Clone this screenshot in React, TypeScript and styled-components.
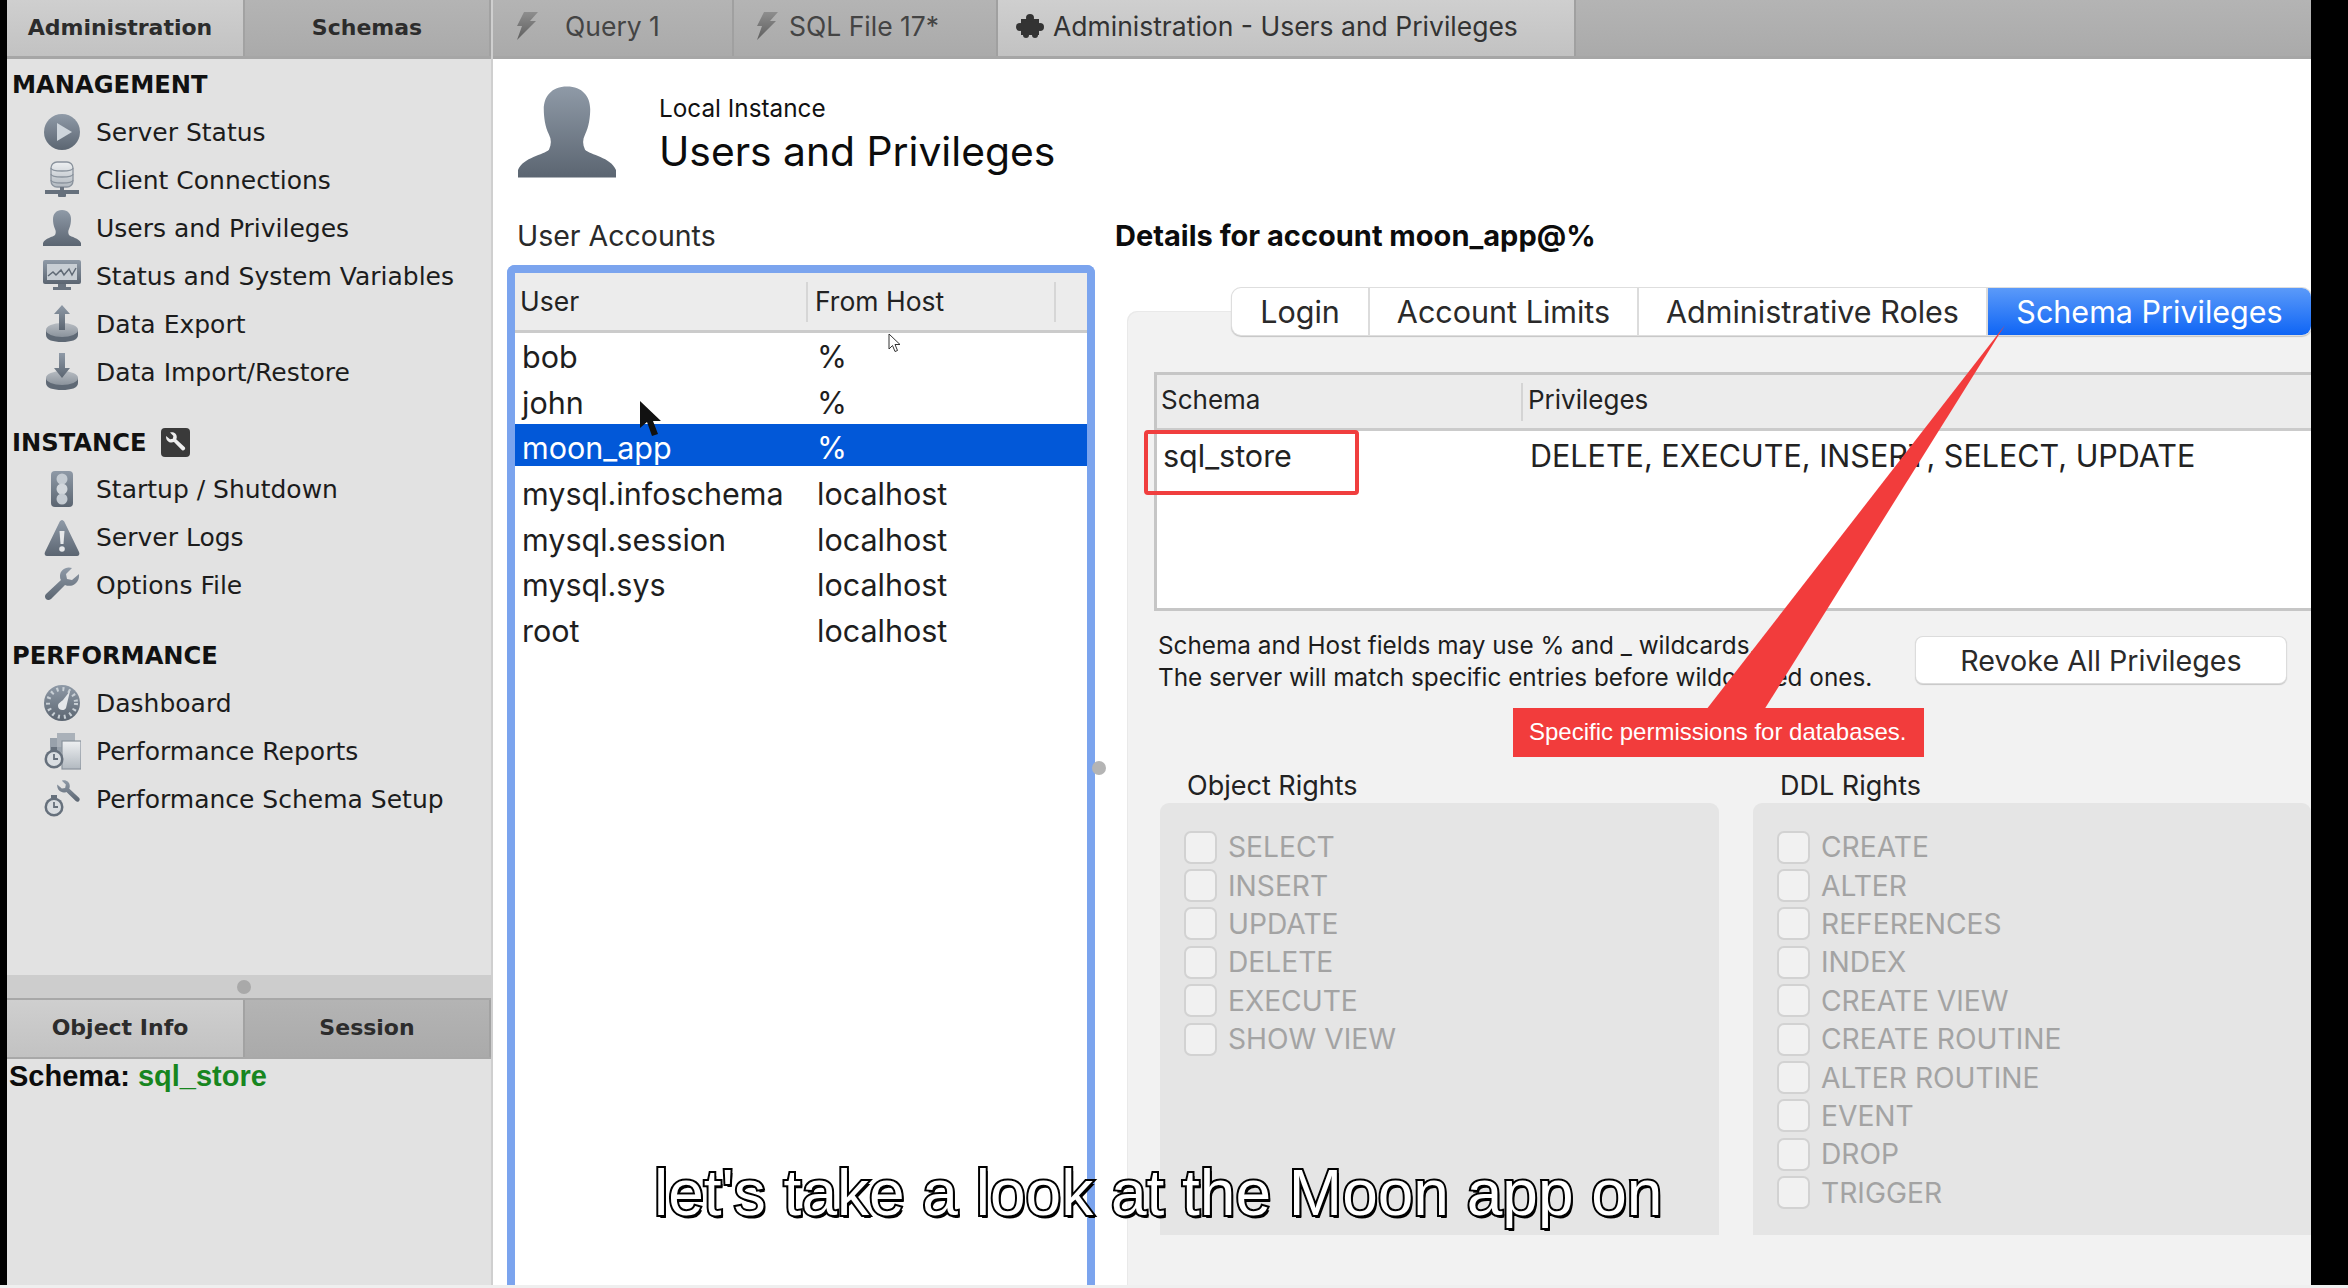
import React from "react";
import styled, { createGlobalStyle } from "styled-components";

const SF = `Inter, "Liberation Sans", sans-serif`;
const LUCIDA = `"DejaVu Sans", "Open Sans", sans-serif`;
const HELV = `"Liberation Sans", Arial, sans-serif`;

const GlobalStyle = createGlobalStyle`
  html, body {
    margin: 0;
    padding: 0;
    background: #000;
    overflow: hidden;
  }
  * {
    box-sizing: border-box;
  }
`;

const Page = styled.div`
  width: 2348px;
  height: 1288px;
  background: #000;
`;
const Frame = styled.div`
  position: relative;
  display: flex;
  width: 2304px;
  height: 1285px;
  margin-left: 7px;
  overflow: hidden;
`;
const BottomStrip = styled.div`
  height: 3px;
  background: #efefef;
`;

/* left sidebar */
const Sidebar = styled.aside`
  display: flex;
  flex-direction: column;
  width: 486px;
  flex-shrink: 0;
  background: #e2e2e2;
  border-right: 2px solid #cfcfcf;
`;
const SideTabs = styled.div`
  display: grid;
  grid-template-columns: 238px 1fr;
  height: 59px;
  border-bottom: 3px solid #a6a6a6;
`;
const SideTab = styled.div<{ $active?: boolean }>`
  display: flex;
  align-items: center;
  justify-content: center;
  padding: 0 ${(p) => (p.$active ? "10px" : "0")} 2px 0;
  background: ${(p) =>
    p.$active
      ? "linear-gradient(#cfcfcf, #c2c2c2)"
      : "linear-gradient(#b4b4b4, #aaaaaa)"};
  border-right: 2px solid #a2a2a2;
  color: #2c2c2c;
  font-family: ${LUCIDA};
  font-size: 22px;
  font-weight: 700;
`;
const Nav = styled.nav`
  display: flex;
  flex-direction: column;
  gap: 23.5px;
  flex: 1;
  padding-top: 3px;
`;
const SectionHead = styled.div`
  display: flex;
  align-items: center;
  gap: 14px;
  height: 46px;
  padding-left: 5px;
  color: #111;
  font-family: ${LUCIDA};
  font-size: 24.2px;
  font-weight: 700;
`;
const NavRow = styled.div`
  display: flex;
  align-items: center;
  gap: 15px;
  height: 48px;
  padding-left: 36px;
  color: #1c1c1c;
  font-family: ${LUCIDA};
  font-size: 25px;
  white-space: nowrap;
`;
const HSplitter = styled.div`
  display: flex;
  align-items: center;
  justify-content: center;
  height: 23px;
  padding-right: 10px;
  background: #cdcdcd;
`;
const Knob = styled.span`
  width: 14px;
  height: 14px;
  border-radius: 50%;
  background: #a9a9a9;
`;
const InfoTabs = styled.div`
  display: grid;
  grid-template-columns: 238px 1fr;
  height: 61px;
  border-top: 2px solid #a8a8a8;
  border-bottom: 2px solid #a8a8a8;
`;
const InfoPane = styled.div`
  height: 226px;
  padding: 0 0 0 2px;
  color: #0c0c0c;
  font-family: ${HELV};
  font-size: 29px;
  font-weight: 700;
  line-height: 34px;
`;
const SchemaName = styled.span`
  color: #17861f;
`;

/* main area */
const Main = styled.main`
  display: flex;
  flex-direction: column;
  flex: 1;
  min-width: 0;
  background: #fff;
`;
const DocTabs = styled.div`
  display: flex;
  height: 59px;
  flex-shrink: 0;
  background: linear-gradient(#b4b4b4, #aaaaaa);
  border-bottom: 3px solid #a6a6a6;
`;
const DocTab = styled.div<{ $width: number; $pad: number; $gap: number; $active?: boolean }>`
  display: flex;
  align-items: center;
  gap: ${(p) => p.$gap}px;
  width: ${(p) => p.$width}px;
  padding: 0 0 4px ${(p) => p.$pad}px;
  background: ${(p) => (p.$active ? "linear-gradient(#cfcfcf, #c2c2c2)" : "none")};
  border-right: 2px solid #a0a0a0;
  color: ${(p) => (p.$active ? "#333" : "#444")};
  font-family: ${SF};
  font-size: 26.5px;
  white-space: nowrap;
`;
const PageHead = styled.header`
  display: flex;
  gap: 43px;
  height: 151px;
  flex-shrink: 0;
  padding: 25px 0 0 25px;
`;
const PageTitles = styled.div`
  margin-top: 9px;
`;
const Instance = styled.div`
  color: #111;
  font-family: ${SF};
  font-size: 24.3px;
  line-height: 30px;
`;
const PageTitle = styled.h1`
  margin: 0;
  color: #0c0c0c;
  font-family: ${SF};
  font-size: 40.8px;
  font-weight: 400;
  line-height: 56px;
`;
const Columns = styled.div`
  display: flex;
  flex: 1;
  min-height: 0;
`;
const AccountsCol = styled.section`
  display: flex;
  flex-direction: column;
  width: 588px;
  margin-left: 14px;
  flex-shrink: 0;
`;
const SectionLabel = styled.div`
  height: 50px;
  padding-left: 10px;
  color: #2a2a2a;
  font-family: ${SF};
  font-size: 28.5px;
  line-height: 52px;
`;
const FocusRing = styled.div`
  flex: 1;
  margin-top: 5px;
  background: #fff;
  border: 8px solid #7ba4ee;
  border-bottom: 0;
  border-radius: 8px 8px 0 0;
`;
const UserHead = styled.div`
  display: grid;
  grid-template-columns: 293px 248px 1fr;
  height: 60px;
  background: #ececec;
  border-bottom: 3px solid #cbcbcb;
`;
const UserHeadCell = styled.div<{ $pad: number; $sep?: boolean }>`
  position: relative;
  padding-left: ${(p) => p.$pad}px;
  color: #222;
  font-family: ${SF};
  font-size: 26.5px;
  line-height: 57px;

  &::after {
    content: "";
    display: ${(p) => (p.$sep ? "block" : "none")};
    position: absolute;
    top: 9px;
    right: 0;
    width: 2px;
    height: 40px;
    background: #d6d6d6;
  }
`;
const UserRow = styled.div<{ $selected?: boolean }>`
  display: grid;
  grid-template-columns: 293px 248px 1fr;
  height: 45.7px;
  background: ${(p) => (p.$selected ? "linear-gradient(#0258d8, #0258d8)" : "none")} no-repeat;
  background-size: 100% 42px;
  color: ${(p) => (p.$selected ? "#fff" : "#1e1e1e")};
  font-family: ${SF};
  font-size: 30.5px;
  line-height: 47.5px;
`;
const UserName = styled.div`
  padding-left: 7px;
`;
const UserHost = styled.div`
  padding-left: 9px;
`;
const VSplitter = styled.span`
  position: absolute;
  left: 1085px;
  top: 761px;
  width: 14px;
  height: 14px;
  border-radius: 50%;
  background: #b4b4b4;
`;
const DetailsCol = styled.section`
  display: flex;
  flex-direction: column;
  flex: 1;
  min-width: 0;
  margin-left: 20px;
`;
const DetailsTitle = styled.h2`
  height: 50px;
  margin: 0;
  color: #0c0c0c;
  font-family: ${SF};
  font-size: 29px;
  font-weight: 700;
  line-height: 52px;
`;
const Panel = styled.div`
  position: relative;
  flex: 1;
  margin: 51px 0 0 12px;
  background: #f2f2f2;
  border-radius: 10px 0 0 0;
  box-shadow: inset 1px 1px 0 #e9e9e9;
`;
const PanelTabs = styled.div`
  position: relative;
  top: -23px;
  display: grid;
  grid-template-columns: 138px 269px 349px 323px;
  height: 47px;
  margin: 0 0 -23px 105px;
  background: #fff;
  border-radius: 9px;
  box-shadow: 0 0 0 1px #dedede, 0 1px 1px 1px #c4c4c4;
`;
const PanelTab = styled.div<{ $active?: boolean }>`
  display: flex;
  align-items: center;
  justify-content: center;
  border-right: ${(p) => (p.$active ? "0" : "2px solid #dcdcdc")};
  border-radius: ${(p) => (p.$active ? "0 9px 9px 0" : "0")};
  background: ${(p) => (p.$active ? "linear-gradient(#5b9af9, #0f65f5)" : "none")};
  color: ${(p) => (p.$active ? "#fff" : "#2a2a2a")};
  font-family: ${SF};
  font-size: 30.5px;
`;
const SchemaTable = styled.div`
  height: 239px;
  margin: 37px 0 0 27px;
  background: #fff;
  border: 3px solid #c6c6c6;
  border-right: 0;
`;
const SchemaHead = styled.div`
  display: grid;
  grid-template-columns: 364px 1fr;
  height: 56px;
  background: #ececec;
  border-bottom: 3px solid #cbcbcb;
  color: #222;
  font-family: ${SF};
  font-size: 26px;
  line-height: 49px;
`;
const SchemaHeadCell = styled.div<{ $pad: number }>`
  padding-left: ${(p) => p.$pad}px;
  & + & {
    background: linear-gradient(#d4d4d4, #d4d4d4) no-repeat 0 8px / 2px 38px;
  }
`;
const SchemaRow = styled.div`
  display: grid;
  grid-template-columns: 364px 1fr;
  color: #222;
  font-family: ${SF};
  font-size: 30.5px;
  line-height: 50px;
`;
const SchemaCell = styled.div<{ $pad: number }>`
  padding-left: ${(p) => p.$pad}px;
  white-space: nowrap;
`;
const NoteRow = styled.div`
  display: flex;
  height: 64px;
  margin-top: 18px;
  padding: 0 25px 0 31px;
`;
const Note = styled.div`
  color: #1c1c1c;
  font-family: ${SF};
  font-size: 24.3px;
  line-height: 32px;
  white-space: nowrap;
`;
const RevokeButton = styled.button`
  width: 370px;
  height: 46px;
  margin: 8px 0 0 auto;
  padding: 0;
  background: #fff;
  border: 0;
  border-radius: 7px;
  box-shadow: 0 0 0 1px #dcdcdc, 0 1px 1px 1px #c6c6c6;
  color: #2a2a2a;
  font-family: ${SF};
  font-size: 28.7px;
`;
const Rights = styled.div`
  display: grid;
  grid-template-columns: 559px 1fr;
  column-gap: 34px;
  margin: 76px 0 0 33px;
`;
const RightsLabel = styled.div`
  height: 34px;
  padding-left: 27px;
  color: #222;
  font-family: ${SF};
  font-size: 27px;
  line-height: 34px;
`;
const RightsBox = styled.div`
  height: 432px;
  padding: 25px 0 0 24px;
  background: #e5e5e5;
  border-radius: 9px 9px 0 0;
`;
const RightRow = styled.label`
  display: flex;
  align-items: center;
  gap: 11px;
  height: 38.4px;
  color: #a3a3a3;
  font-family: ${SF};
  font-size: 28.2px;
`;
const CheckBox = styled.span`
  width: 33px;
  height: 33px;
  flex-shrink: 0;
  background: #f1f1f1;
  border: 2px solid #d2d2d2;
  border-radius: 7px;
`;
const ArrowSvg = styled.svg`
  position: absolute;
  left: 0;
  top: 0;
  width: 100%;
  height: 100%;
  pointer-events: none;
`;
const Callout = styled.div`
  position: absolute;
  left: 386px;
  top: 397px;
  width: 411px;
  height: 49px;
  padding-left: 16px;
  background: #f23c3c;
  color: #fff;
  font-family: ${HELV};
  font-size: 24px;
  line-height: 48px;
  white-space: nowrap;
`;
const RedFrame = styled.div`
  position: absolute;
  left: 17px;
  top: 119px;
  width: 215px;
  height: 65px;
  border: 4px solid #f03e3e;
  border-radius: 4px;
`;
const Subtitle = styled.div`
  position: absolute;
  left: 647px;
  top: 1155px;
  color: #fff;
  font-family: ${HELV};
  font-size: 64px;
  line-height: 76px;
  white-space: nowrap;
  -webkit-text-stroke: 4px #000;
  paint-order: stroke fill;
  text-shadow: 2px 3px 0 #000;
`;
const CursorSvg = styled.svg<{ $x: number; $y: number }>`
  position: absolute;
  left: ${(p) => p.$x}px;
  top: ${(p) => p.$y}px;
`;
const IconSvg = styled.svg`
  width: 38px;
  height: 38px;
  flex-shrink: 0;
`;
const ToolTile = styled.svg`
  width: 29px;
  height: 29px;
`;
const HiddenDefs = styled.svg`
  position: absolute;
  width: 0;
  height: 0;
`;

/* icons */
const USER_PATH =
  "M19 1c-6 0-9 4-9 9 0 3 .5 7 2 10 1 2 1 4 0 6-2 2-10 3-12 8v3h38v-3c-2-5-10-6-12-8-1-2-1-4 0-6 1.5-3 2-7 2-10 0-5-3-9-9-9z";
const WRENCH_PATH =
  "M36 7l-7 6-5-1-1-5 6-6C23-1 17 3 17 9c0 2 .3 3 1 4L3 27c-3 3 1 8 5 5l14-14c7 3 15-2 14-11z";

const ServerIcon = () => (
  <IconSvg viewBox="0 0 38 38">
    <circle cx="19" cy="19" r="18" fill="url(#slate)" />
    <polygon points="14,10 14,28 29,19" fill="#ced5dc" />
  </IconSvg>
);
const ClientIcon = () => (
  <IconSvg viewBox="0 0 38 38">
    <rect x="8" y="1" width="22" height="25" rx="6" fill="url(#pale)" stroke="#8a939d" strokeWidth="1.3" />
    <path d="M8 7c0 4 22 4 22 0M8 13c0 4 22 4 22 0M8 19c0 4 22 4 22 0" fill="none" stroke="#8a939d" strokeWidth="1.3" />
    <rect x="17" y="26" width="4" height="5" fill="#6a7480" />
    <rect x="2" y="29" width="34" height="4" fill="#66707c" />
    <rect x="15" y="31" width="8" height="5" rx="1" fill="#66707c" />
  </IconSvg>
);
const UserIcon = () => (
  <IconSvg viewBox="0 0 38 38">
    <path d={USER_PATH} fill="url(#slate)" />
  </IconSvg>
);
const MonitorIcon = () => (
  <IconSvg viewBox="0 0 38 38">
    <rect x="0" y="3" width="38" height="24" rx="2" fill="url(#slate)" />
    <rect x="4" y="7" width="30" height="16" fill="#c8ced4" />
    <polyline points="5,19 10,15 13,18 18,13 21,18 26,12 29,18 33,11" fill="none" stroke="#5f6975" strokeWidth="1.5" />
    <rect x="15" y="27" width="8" height="3" fill="#6a7480" />
    <rect x="10" y="30" width="18" height="3" fill="#6a7480" />
  </IconSvg>
);
const Disk = () => (
  <>
    <path d="M3 25v5c0 5 7 7 16 7s16-2 16-7v-5z" fill="#5f6975" />
    <ellipse cx="19" cy="25" rx="16" ry="7" fill="url(#disk)" />
  </>
);
const ExportIcon = () => (
  <IconSvg viewBox="0 0 38 38">
    <Disk />
    <polygon points="19,0 27,9 22,9 22,25 16,25 16,9 11,9" fill="url(#slate)" />
  </IconSvg>
);
const ImportIcon = () => (
  <IconSvg viewBox="0 0 38 38">
    <Disk />
    <polygon points="16,0 22,0 22,15 27,15 19,25 11,15 16,15" fill="url(#slate)" />
  </IconSvg>
);
const StartupIcon = () => (
  <IconSvg viewBox="0 0 38 38">
    <rect x="8" y="0" width="22" height="36" rx="4" fill="url(#slate)" />
    <circle cx="19" cy="8" r="5.5" fill="#c4cbd2" />
    <circle cx="19" cy="18" r="5.5" fill="#d2d7dc" />
    <circle cx="19" cy="28" r="5.5" fill="#c4cbd2" />
  </IconSvg>
);
const LogsIcon = () => (
  <IconSvg viewBox="0 0 38 38">
    <path d="M19 1c1 0 2 1 2.500 2L36 33c1 2 0 4-2 4H4c-2 0-3-2-2-4L16.500 3c.5-1 1.500-2 2.500-2z" fill="url(#slate)" />
    <path d="M16.500 12h5l-1 13h-3z" fill="#e6e8ea" />
    <circle cx="19" cy="30" r="2.800" fill="#e6e8ea" />
  </IconSvg>
);
const WrenchIcon = () => (
  <IconSvg viewBox="0 0 38 38">
    <path d={WRENCH_PATH} fill="url(#slate)" />
  </IconSvg>
);
const DashboardIcon = () => (
  <IconSvg viewBox="0 0 38 38">
    <circle cx="19" cy="19" r="18" fill="url(#slate)" />
    <circle cx="19" cy="19" r="14" fill="none" stroke="#c9d0d6" strokeWidth="4" strokeDasharray="2 4" />
    <path d="M27 7l-4 17c-1 3-8 3-8-2 0-3 3-4 5-6z" fill="#e4e7ea" />
  </IconSvg>
);
const Stopwatch = () => (
  <>
    <rect x="8" y="15" width="6" height="3" fill="#66707c" />
    <circle cx="11" cy="27" r="9.500" fill="#66707c" />
    <circle cx="11" cy="27" r="7" fill="#d9dde1" />
    <path d="M11 22v5h4" fill="none" stroke="#66707c" strokeWidth="1.800" />
  </>
);
const ReportsIcon = () => (
  <IconSvg viewBox="0 0 38 38">
    <rect x="7" y="6" width="14" height="14" fill="#98a1ab" />
    <rect x="14" y="1" width="18" height="14" fill="#aab1b9" />
    <rect x="19" y="9" width="19" height="28" fill="url(#pale)" stroke="#8a939d" strokeWidth="1.200" />
    <Stopwatch />
  </IconSvg>
);
const SetupIcon = () => (
  <IconSvg viewBox="0 0 38 38">
    <g transform="translate(38 0) scale(-.66 .66)">
      <path d={WRENCH_PATH} fill="url(#slate)" />
    </g>
    <Stopwatch />
  </IconSvg>
);
const BoltIcon = () => (
  <svg width="24" height="28" viewBox="0 0 24 28">
    <polygon points="10,0 24,0 16,9 22,9 3,28 8,14 3,14" fill="url(#bolt)" />
  </svg>
);
const PuzzleIcon = () => (
  <svg width="28" height="24" viewBox="0 0 28 24">
    <g fill="#333">
      <rect x="5" y="5" width="18" height="16" />
      <circle cx="14" cy="4" r="4" />
      <circle cx="4" cy="13" r="4" />
      <circle cx="24" cy="13" r="4" />
      <circle cx="10" cy="21" r="3" />
      <circle cx="19" cy="21" r="3" />
    </g>
  </svg>
);

const SECTIONS = [
  {
    title: "MANAGEMENT",
    items: [
      { label: "Server Status", icon: <ServerIcon /> },
      { label: "Client Connections", icon: <ClientIcon /> },
      { label: "Users and Privileges", icon: <UserIcon /> },
      { label: "Status and System Variables", icon: <MonitorIcon /> },
      { label: "Data Export", icon: <ExportIcon /> },
      { label: "Data Import/Restore", icon: <ImportIcon /> },
    ],
  },
  {
    title: "INSTANCE",
    tile: true,
    items: [
      { label: "Startup / Shutdown", icon: <StartupIcon /> },
      { label: "Server Logs", icon: <LogsIcon /> },
      { label: "Options File", icon: <WrenchIcon /> },
    ],
  },
  {
    title: "PERFORMANCE",
    items: [
      { label: "Dashboard", icon: <DashboardIcon /> },
      { label: "Performance Reports", icon: <ReportsIcon /> },
      { label: "Performance Schema Setup", icon: <SetupIcon /> },
    ],
  },
];

const USERS = [
  { name: "bob", host: "%" },
  { name: "john", host: "%" },
  { name: "moon_app", host: "%", selected: true },
  { name: "mysql.infoschema", host: "localhost" },
  { name: "mysql.session", host: "localhost" },
  { name: "mysql.sys", host: "localhost" },
  { name: "root", host: "localhost" },
];

const OBJECT_RIGHTS = ["SELECT", "INSERT", "UPDATE", "DELETE", "EXECUTE", "SHOW VIEW"];
const DDL_RIGHTS = [
  "CREATE",
  "ALTER",
  "REFERENCES",
  "INDEX",
  "CREATE VIEW",
  "CREATE ROUTINE",
  "ALTER ROUTINE",
  "EVENT",
  "DROP",
  "TRIGGER",
];

const App = () => {
  return (
    <Page>
      <GlobalStyle />
      <HiddenDefs>
        <defs>
          <linearGradient id="slate" x1="0" y1="0" x2="0" y2="1">
            <stop offset="0" stopColor="#8f9aa7" />
            <stop offset="1" stopColor="#5b6571" />
          </linearGradient>
          <linearGradient id="pale" x1="0" y1="0" x2="0" y2="1">
            <stop offset="0" stopColor="#eef0f2" />
            <stop offset="1" stopColor="#b2b9c0" />
          </linearGradient>
          <linearGradient id="disk" x1="0" y1="0" x2="0" y2="1">
            <stop offset="0" stopColor="#b7bcc2" />
            <stop offset="1" stopColor="#8b939c" />
          </linearGradient>
          <linearGradient id="bolt" x1="0" y1="0" x2="0" y2="1">
            <stop offset="0" stopColor="#8e8e8e" />
            <stop offset="1" stopColor="#5e5e5e" />
          </linearGradient>
        </defs>
      </HiddenDefs>
      <Frame>
        <Sidebar>
          <SideTabs>
            <SideTab $active>Administration</SideTab>
            <SideTab>Schemas</SideTab>
          </SideTabs>
          <Nav>
            {SECTIONS.map((section) => (
              <div key={section.title}>
                <SectionHead>
                  {section.title}
                  {section.tile && (
                    <ToolTile viewBox="0 0 29 29">
                      <rect width="29" height="29" rx="4" fill="#3a3a3a" />
                      <g transform="translate(4 4) scale(.56)">
                        <path d={WRENCH_PATH} fill="#eee" transform="translate(38 0) scale(-1 1)" />
                      </g>
                    </ToolTile>
                  )}
                </SectionHead>
                {section.items.map((item) => (
                  <NavRow key={item.label}>
                    {item.icon}
                    {item.label}
                  </NavRow>
                ))}
              </div>
            ))}
          </Nav>
          <HSplitter>
            <Knob />
          </HSplitter>
          <InfoTabs>
            <SideTab $active>Object Info</SideTab>
            <SideTab>Session</SideTab>
          </InfoTabs>
          <InfoPane>
            Schema: <SchemaName>sql_store</SchemaName>
          </InfoPane>
        </Sidebar>

        <Main>
          <DocTabs>
            <DocTab $width={241} $pad={21} $gap={27}>
              <BoltIcon />
              Query 1
            </DocTab>
            <DocTab $width={264} $pad={20} $gap={11}>
              <BoltIcon />
              SQL File 17*
            </DocTab>
            <DocTab $width={578} $pad={18} $gap={9} $active>
              <PuzzleIcon />
              Administration - Users and Privileges
            </DocTab>
          </DocTabs>
          <PageHead>
            <svg width="98" height="96" viewBox="0 0 38 38" preserveAspectRatio="none">
              <path d={USER_PATH} fill="url(#slate)" />
            </svg>
            <PageTitles>
              <Instance>Local Instance</Instance>
              <PageTitle>Users and Privileges</PageTitle>
            </PageTitles>
          </PageHead>
          <Columns>
            <AccountsCol>
              <SectionLabel>User Accounts</SectionLabel>
              <FocusRing>
                <UserHead>
                  <UserHeadCell $pad={5} $sep>User</UserHeadCell>
                  <UserHeadCell $pad={7} $sep>From Host</UserHeadCell>
                </UserHead>
                {USERS.map((user) => (
                  <UserRow key={user.name} $selected={user.selected}>
                    <UserName>{user.name}</UserName>
                    <UserHost>{user.host}</UserHost>
                  </UserRow>
                ))}
              </FocusRing>
            </AccountsCol>
            <DetailsCol>
              <DetailsTitle>Details for account moon_app@%</DetailsTitle>
              <Panel>
                <PanelTabs>
                  <PanelTab>Login</PanelTab>
                  <PanelTab>Account Limits</PanelTab>
                  <PanelTab>Administrative Roles</PanelTab>
                  <PanelTab $active>Schema Privileges</PanelTab>
                </PanelTabs>
                <SchemaTable>
                  <SchemaHead>
                    <SchemaHeadCell $pad={4}>Schema</SchemaHeadCell>
                    <SchemaHeadCell $pad={7}>Privileges</SchemaHeadCell>
                  </SchemaHead>
                  <SchemaRow>
                    <SchemaCell $pad={6}>sql_store</SchemaCell>
                    <SchemaCell $pad={9}>DELETE, EXECUTE, INSERT, SELECT, UPDATE</SchemaCell>
                  </SchemaRow>
                </SchemaTable>
                <NoteRow>
                  <Note>
                    Schema and Host fields may use % and _ wildcards.
                    <br />
                    The server will match specific entries before wildcarded ones.
                  </Note>
                  <RevokeButton>Revoke All Privileges</RevokeButton>
                </NoteRow>
                <Rights>
                  <div>
                    <RightsLabel>Object Rights</RightsLabel>
                    <RightsBox>
                      {OBJECT_RIGHTS.map((right) => (
                        <RightRow key={right}>
                          <CheckBox />
                          {right}
                        </RightRow>
                      ))}
                    </RightsBox>
                  </div>
                  <div>
                    <RightsLabel>DDL Rights</RightsLabel>
                    <RightsBox>
                      {DDL_RIGHTS.map((right) => (
                        <RightRow key={right}>
                          <CheckBox />
                          {right}
                        </RightRow>
                      ))}
                    </RightsBox>
                  </div>
                </Rights>
                <RedFrame />
                <ArrowSvg>
                  <polygon points="878,14 579,399 637,399" fill="#f23c3c" />
                </ArrowSvg>
                <Callout>Specific permissions for databases.</Callout>
              </Panel>
            </DetailsCol>
          </Columns>
        </Main>

        <VSplitter />
        <CursorSvg $x={881} $y={333} width="13" height="20" viewBox="0 0 13 20">
          <path d="M1 1v15l3.500-3.500 2.500 6 2.500-1-2.500-6h5z" fill="#fff" stroke="#333" strokeWidth="1" />
        </CursorSvg>
        <CursorSvg $x={631} $y={400} width="24" height="38" viewBox="0 0 24 38">
          <path d="M2 1v27l7-6 5 14 6-2-5-13h8z" fill="#111" />
        </CursorSvg>
        <Subtitle>let's take a look at the Moon app on</Subtitle>
      </Frame>
      <BottomStrip />
    </Page>
  );
};

export default App;
